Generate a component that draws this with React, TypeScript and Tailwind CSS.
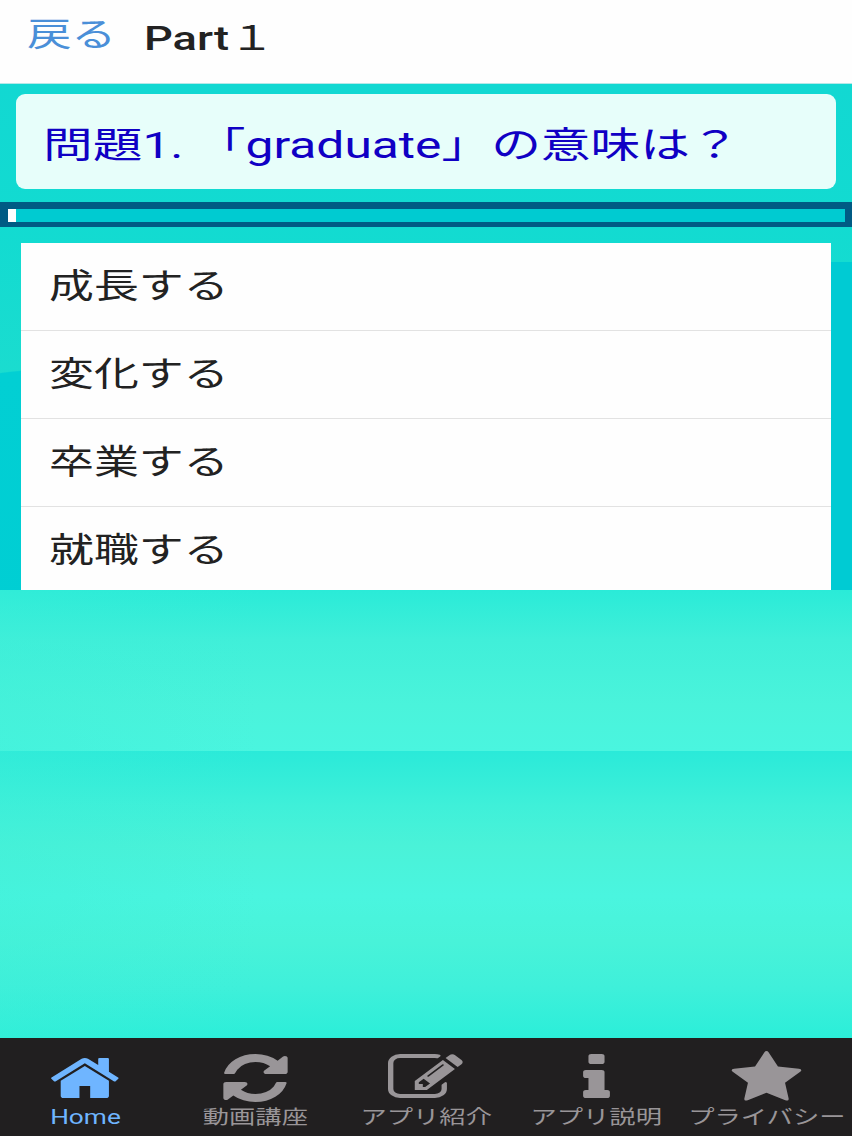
import { useState } from "react";

const answers = ["成長する", "変化する", "卒業する", "就職する"];

const tabs = [
  {
    label: "Home",
    iconClass: "ml-1",
    path: "M1408 992v480q0 26-19 45t-45 19h-384v-384h-256v384h-384q-26 0-45-19t-19-45v-480q0-1 .5-3t.5-3l575-474 575 474q1 2 1 6zm223-69l-62 74q-8 9-21 11h-3q-13 0-21-7l-692-577-692 577q-12 8-24 7-13-2-21-11l-62-74q-8-10-7-23.5t11-21.5l719-599q32-26 76-26t76 26l244 204v-195q0-14 9-23t23-9h192q14 0 23 9t9 23v408l219 182q10 8 11 21.5t-7 23.5z",
  },
  {
    label: "動画講座",
    iconClass: "",
    path: "M1639 1056q0 5-1 7-64 268-268 434.5t-478 166.5q-146 0-282.5-55t-243.5-157l-129 129q-19 19-45 19t-45-19-19-45v-448q0-26 19-45t45-19h448q26 0 45 19t19 45-19 45l-137 137q71 66 161 102t187 36q134 0 250-65t186-179q11-17 53-117 8-23 30-23h192q13 0 22.5 9.5t9.5 22.5zm25-800v448q0 26-19 45t-45 19h-448q-26 0-45-19t-19-45 19-45l138-138q-148-137-349-137-134 0-250 65t-186 179q-11 17-53 117-8 23-30 23h-199q-13 0-22.5-9.5t-9.5-22.5v-7q65-268 270-434.5t480-166.5q146 0 284 55.5t245 156.5l130-129q19-19 45-19t45 19 19 45z",
  },
  {
    label: "アプリ紹介",
    iconClass: "",
    path: "M888 1184l116-116-152-152-116 116v56h96v96h56zm440-720q-16-16-33 1l-350 350q-17 17-1 33t33-1l350-350q17-17 1-33zm80 594v190q0 119-84.5 203.5t-203.5 84.5h-832q-119 0-203.5-84.5t-84.5-203.5v-832q0-119 84.5-203.5t203.5-84.5h832q63 0 117 25 15 7 18 23 3 17-9 29l-49 49q-14 14-32 8-23-6-45-6h-832q-66 0-113 47t-47 113v832q0 66 47 113t113 47h832q66 0 113-47t47-113v-126q0-13 9-22l64-64q15-15 35-7t20 29zm-96-738l288 288-672 672h-288v-288zm444 132l-92 92-288-288 92-92q28-28 68-28t68 28l152 152q28 28 28 68t-28 68z",
  },
  {
    label: "アプリ説明",
    iconClass: "",
    path: "M1216 1344v128q0 26-19 45t-45 19h-512q-26 0-45-19t-19-45v-128q0-26 19-45t45-19h64v-384h-64q-26 0-45-19t-19-45v-128q0-26 19-45t45-19h384q26 0 45 19t19 45v576h64q26 0 45 19t19 45zm-128-1152v192q0 26-19 45t-45 19h-256q-26 0-45-19t-19-45v-192q0-26 19-45t45-19h256q26 0 45 19t19 45z",
  },
  {
    label: "プライバシー",
    iconClass: "",
    path: "M1728 647q0 22-26 48l-363 354 86 500q1 7 1 20 0 21-10.5 35.5t-30.5 14.5q-19 0-40-12l-449-236-449 236q-22 12-40 12-21 0-31.5-14.5t-10.5-35.5q0-6 2-20l86-500-364-354q-25-27-25-48 0-37 56-46l502-73 225-455q19-41 49-41t49 41l225 455 502 73q56 9 56 46z",
  },
];

export default function App() {
  const [activeTab, setActiveTab] = useState("Home");

  return (
    <div className="flex h-[1136px] w-[852px] flex-col overflow-hidden font-['Roboto','Noto_Sans_CJK_JP',sans-serif] text-[#222]">
      <header className="flex h-[84px] shrink-0 items-start border-b border-[#b5e8e8] bg-[#fefefe] pl-[27px]">
        <button className="mt-[10px] h-[50px] w-[117px] text-left">
          <span className="inline-block origin-left scale-x-[1.35] whitespace-nowrap text-[33px] leading-[50px] text-[#4a8fd8]">
            戻る
          </span>
        </button>
        <h1 className="mt-[13px] origin-left scale-x-[1.33] whitespace-nowrap text-[34px] font-medium leading-[50px]">
          Part<span className="font-normal">１</span>
        </h1>
      </header>

      <main className="flex h-[506px] shrink-0 flex-col bg-[radial-gradient(ellipse_300px_250px_at_50px_535px,#00ced3_0%,#02cfd3_99.5%,transparent_100%),linear-gradient(90deg,transparent_800px,#00cbd3_800px),linear-gradient(180deg,#12d8d2_0px,#12dbd1_140px,#1bdccf_300px,#10d8d2_506px)] bg-[size:100%_100%,100%_328px,100%_100%] bg-[position:0_0,0_100%,0_0] bg-no-repeat pt-[10px]">
        <section className="mx-4 flex h-[95px] shrink-0 items-center rounded-[9px] bg-[#e7fefa] pl-[27px] pt-[9px]">
          <h2 className="origin-left scale-x-[1.355] whitespace-nowrap text-[36.7px] leading-[50px] text-[#1000c4]">
            問題1. 「graduate」の意味は？
          </h2>
        </section>

        <div className="mt-[13px] h-[25px] shrink-0 bg-[#005b84] pl-2 pr-[7px] pt-[7px]">
          <div className="h-[13px] bg-[#00cbd1]">
            <div className="h-full w-2 bg-white" />
          </div>
        </div>

        <ul className="ml-[21px] mr-[21px] mt-4 h-[347px] shrink-0 overflow-hidden bg-[#fefefe]">
          {answers.map((answer) => (
            <li key={answer} className="h-[88px] border-b border-[#e2e2e2] pl-[28px] pt-[18px]">
              <span className="inline-block origin-left scale-x-[1.32] whitespace-nowrap text-[34px] leading-[50px]">
                {answer}
              </span>
            </li>
          ))}
        </ul>
      </main>

      <div className="h-[161px] shrink-0 bg-[linear-gradient(90deg,#3ceed860_0px,transparent_260px),linear-gradient(180deg,#2aebd8_0px,#40efd9_50px,#4af3db_115px,#4af5df_161px)]" />
      <div className="h-[287px] shrink-0 bg-[linear-gradient(90deg,#3ceed860_0px,transparent_260px),linear-gradient(180deg,#2aead9_0px,#3ff0d9_55px,#4af2d8_95px,#4af5df_145px,#48f3d9_190px,#3ff0da_235px,#2beed9_287px)]" />

      <nav className="grid h-[98px] shrink-0 grid-cols-5 bg-[#211f20]">
        {tabs.map((tab) => (
          <button
            key={tab.label}
            onClick={() => setActiveTab(tab.label)}
            className={`flex min-w-0 flex-col items-center pt-3 ${activeTab === tab.label ? "text-[#6fb5ff]" : "text-[#999598]"}`}
          >
            <svg viewBox="0 0 1792 1792" preserveAspectRatio="none" fill="currentColor" className={`h-14 w-[75px] shrink-0 ${tab.iconClass}`}>
              <path d={tab.path} />
            </svg>
            <span className="-mt-[3px] scale-x-[1.335] whitespace-nowrap text-[19.7px] leading-[30px]">
              {tab.label}
            </span>
          </button>
        ))}
      </nav>
    </div>
  );
}
